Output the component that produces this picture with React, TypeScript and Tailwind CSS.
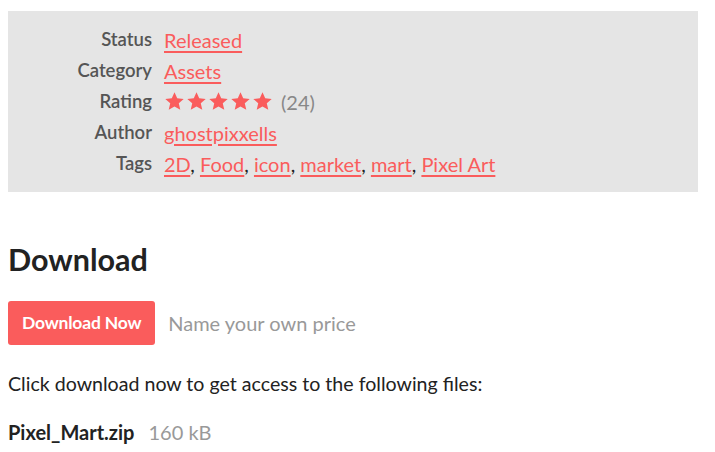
const link = 'text-[#fa5c5c] underline underline-offset-[3px] decoration-[1.5px]'

function Star() {
  return (
    <svg viewBox="0 0 24 24" className="h-[21px] w-[21px] fill-[#fa5c5c]">
      <path d="M12 1.5l3.1 6.9 7.4.7-5.6 5 1.7 7.4L12 17.6l-6.6 3.9 1.7-7.4-5.6-5 7.4-.7z" />
    </svg>
  )
}

function Row({ label, children }: { label: string; children: React.ReactNode }) {
  return (
    <tr className="h-[31px]">
      <td className="w-[156px] pr-3 text-right align-middle text-[18.5px] font-semibold text-[#555]">{label}</td>
      <td className="align-middle">{children}</td>
    </tr>
  )
}

export default function App() {
  const tags = ['2D', 'Food', 'icon', 'market', 'mart', 'Pixel Art']

  return (
    <div className="min-h-[452px] bg-white pl-2 pr-[17px] pt-[11px] font-['Lato',sans-serif] text-[20px] text-[#222]">
      <div className="bg-[#e5e5e5] pt-[13px] pb-[13px]">
        <table className="border-collapse">
          <tbody>
            <Row label="Status"><a className={link}>Released</a></Row>
            <Row label="Category"><a className={link}>Assets</a></Row>
            <Row label="Rating">
              <span className="flex items-center gap-[1px]">
                <Star /><Star /><Star /><Star /><Star />
                <span className="ml-[7px] text-[#888]">(24)</span>
              </span>
            </Row>
            <Row label="Author"><a className={link}>ghostpixxells</a></Row>
            <Row label="Tags">
              {tags.map((t, i) => (
                <span key={t}>
                  <a className={link}>{t}</a>
                  {i < tags.length - 1 && ', '}
                </span>
              ))}
            </Row>
          </tbody>
        </table>
      </div>

      <h2 className="mt-[48px] text-[30.5px] font-bold leading-[38px] text-[#222]">Download</h2>

      <div className="mt-[23px] flex items-center gap-[13px]">
        <button className="h-[44px] rounded-[3px] bg-[#fa5c5c] px-[14px] text-[17.5px] font-bold tracking-[-0.2px] text-white">
          Download Now
        </button>
        <span className="text-[#999]">Name your own price</span>
      </div>

      <p className="mt-[26px] text-[19.6px] leading-[26px]">Click download now to get access to the following files:</p>

      <div className="mt-[20px] flex items-baseline gap-[14px]">
        <strong className="font-bold">Pixel_Mart.zip</strong>
        <span className="text-[#999]">160 kB</span>
      </div>
    </div>
  )
}
